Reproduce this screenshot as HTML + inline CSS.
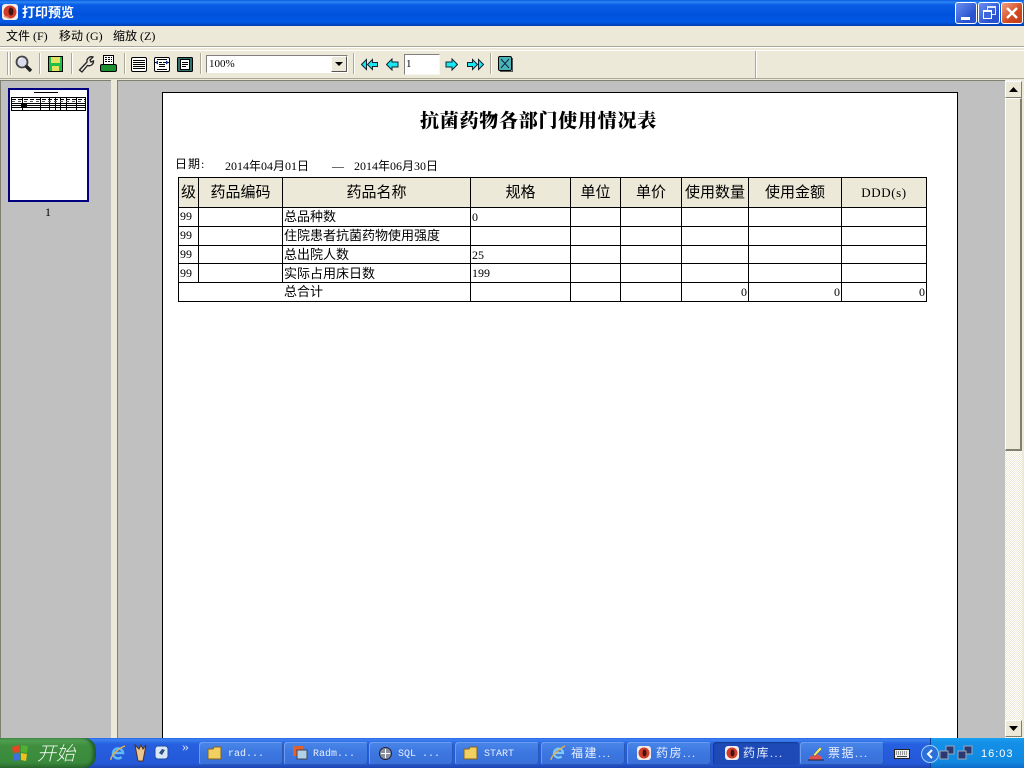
<!DOCTYPE html>
<html><head><meta charset="utf-8"><style>
html,body{margin:0;padding:0;width:1024px;height:768px;overflow:hidden;background:#ece9d8}
body{position:relative;font:12px/14px "Liberation Serif","WenQuanYi Zen Hei","Noto Sans CJK SC",sans-serif;color:#000}
div,svg{position:absolute}
.t{white-space:nowrap}
.h{position:absolute;background:#000;height:1px}
.v{position:absolute;background:#000;width:1px}
.th{font-size:15px;line-height:16px;text-align:center;white-space:nowrap}
.c{white-space:nowrap}
.l{font-size:13px}
.task{top:742px;height:23px;border-radius:3px;background:linear-gradient(#4a86e8,#3c76e0 50%,#3a70d8);color:#fff;box-shadow:inset 1px 1px 0 #6a9cf0,inset -1px -1px 0 #2a58b8}
.task span{position:absolute;left:29px;top:4px;white-space:nowrap;letter-spacing:1.500px;color:#e8f0ff}
.task span.m{font:10px/14px "Liberation Mono",monospace;letter-spacing:0;top:6px}
.sep{position:absolute;top:53px;width:1px;height:21px;background:#aca899;box-shadow:1px 0 0 #fff}
</style></head><body>

<!-- title bar -->
<div style="left:0;top:0;width:1024px;height:26px;background:linear-gradient(#0a5ae0 0,#2c86f4 8%,#0a5fe6 18%,#0052dc 55%,#0058e4 85%,#003cb0 100%)"></div>
<svg style="left:1px;top:3px" width="18" height="18" viewBox="0 0 18 18"><rect x="1" y="1" width="16" height="16" rx="3" fill="#f4ece8"/><circle cx="9" cy="9" r="6.500" fill="#d03c28"/><ellipse cx="10" cy="8.500" rx="2.500" ry="4" fill="#401410"/><path d="M3 13l5 2" stroke="#e88870" stroke-width="1.500"/></svg>
<div class="t" style="left:22px;top:5px;font-size:13px;line-height:15px;font-weight:bold;color:#fff">打印预览</div>
<div style="left:955px;top:2px;width:20px;height:20px;border:1px solid #fff;border-radius:3px;box-sizing:content-box;background:linear-gradient(135deg,#6a90f0,#2a52d0 70%)"><div style="left:5px;top:14px;width:9px;height:3px;background:#fff"></div></div>
<div style="left:978px;top:2px;width:20px;height:20px;border:1px solid #fff;border-radius:3px;background:linear-gradient(135deg,#6a90f0,#2a52d0 70%)"><div style="left:8px;top:3px;width:7px;height:6px;border:1px solid #dfe8ff;border-top-width:2px"></div><div style="left:4px;top:7px;width:7px;height:6px;border:1px solid #fff;border-top-width:2px;background:#3f68dc"></div></div>
<div style="left:1001px;top:2px;width:20px;height:20px;border:1px solid #fff;border-radius:3px;background:linear-gradient(135deg,#f0a080,#d04a20 60%,#c03c18)"><svg style="left:3px;top:3px" width="14" height="14"><path d="M2 2l10 10M12 2L2 12" stroke="#fff" stroke-width="2.400"/></svg></div>

<!-- menu -->
<div class="t" style="left:6px;top:29px">文件 (F)</div>
<div class="t" style="left:59px;top:29px">移动 (G)</div>
<div class="t" style="left:113px;top:29px">缩放 (Z)</div>

<!-- toolbar -->
<div style="left:0;top:46px;width:1024px;height:1px;background:#aca899"></div>
<div style="left:0;top:47px;width:1024px;height:1px;background:#fff"></div>
<div style="left:0;top:50px;width:755px;height:27px;border-top:1px solid #fff;border-bottom:1px solid #aca899;border-right:1px solid #aca899;box-shadow:1px 0 0 #fff"></div>
<div style="left:755px;top:50px;width:269px;height:27px;border-top:1px solid #fff;border-bottom:1px solid #aca899"></div>
<div style="left:0;top:78px;width:1024px;height:1px;background:#aca899"></div>
<div style="left:7px;top:52px;width:1px;height:23px;background:#aca899;box-shadow:1px 0 0 #fff,3px 0 0 #aca899,4px 0 0 #fff"></div>
<div class="sep" style="left:39px"></div><div class="sep" style="left:71px"></div><div class="sep" style="left:124px"></div><div class="sep" style="left:200px"></div><div class="sep" style="left:353px"></div><div class="sep" style="left:490px"></div>

<svg style="left:15px;top:55px" width="18" height="18"><circle cx="7" cy="7" r="5.500" fill="#d8dcec" stroke="#444" stroke-width="1.800"/><path d="M4 5a3 3 0 0 1 3-2" stroke="#fff" fill="none"/><path d="M11 11l5 5" stroke="#222" stroke-width="3.400"/></svg>
<svg style="left:48px;top:56px" width="15" height="16"><rect x=".5" y=".5" width="14" height="15" fill="#20c048" stroke="#000"/><rect x="3" y="1" width="9" height="6" fill="#e8e060"/><rect x="4" y="10" width="7" height="5" fill="#e8e060"/></svg>
<svg style="left:78px;top:55px" width="17" height="18"><path d="M1.500 15l7.500-8a4.500 4.500 0 0 1 6-5l-3 3 1 2 2.500-1a4.500 4.500 0 0 1-6 4.500L4 17z" fill="#ece8dc" stroke="#222" stroke-width="1.300"/></svg>
<svg style="left:100px;top:55px" width="17" height="18"><rect x="3.500" y=".5" width="10" height="9" fill="#fff" stroke="#000"/><path d="M5 2.500h7M5 4.500h7M5 6.500h7" stroke="#000" stroke-dasharray="2 1"/><rect x=".5" y="9.500" width="16" height="7" rx="1.500" fill="#1a9030" stroke="#000"/></svg>
<svg style="left:131px;top:57px" width="16" height="15"><rect x=".5" y=".5" width="15" height="14" rx="1.500" fill="#fff" stroke="#000"/><path d="M2 3.500h12M2 5.500h12M2 7.500h12M2 9.500h12M2 11.500h12" stroke="#000"/></svg>
<svg style="left:154px;top:57px" width="16" height="15"><rect x=".5" y=".5" width="15" height="14" rx="1.500" fill="#fff" stroke="#000"/><path d="M3 2.500h10M5 7.500h6M5 9.500h6M3 12.500h10" stroke="#000"/><path d="M1 5.500h14" stroke="#000" stroke-dasharray="3 1"/><path d="M1 5.500l3-2v4zM15 5.500l-3-2v4z" fill="#003090"/></svg>
<svg style="left:177px;top:57px" width="16" height="15"><rect x=".5" y=".5" width="15" height="14" rx="1" fill="#2f7070" stroke="#000"/><rect x="3.500" y="2.500" width="9" height="10" fill="#fff" stroke="#000"/><path d="M5 5.500h6M5 7.500h6M5 9.500h4" stroke="#000"/></svg>

<!-- combo -->
<div style="left:206px;top:55px;width:142px;height:18px;background:#fff;box-sizing:border-box;border:1px solid #808080;border-right-color:#fff;border-bottom-color:#fff"></div>
<div class="t" style="left:209px;top:57px;font-size:11px">100%</div>
<div style="left:331px;top:56px;width:16px;height:16px;background:#ece9d8;box-sizing:border-box;border:1px solid #fff;border-right-color:#555;border-bottom-color:#555"></div>
<svg style="left:335px;top:62px" width="8" height="4"><path d="M0 0h8L4 4z"/></svg>

<svg style="left:361px;top:58px" width="17" height="13"><path d="M5.500 1.500L.5 6.500l5 5zM11.500 1.500l-5 5 5 5v-3h5v-4h-5z" fill="#18e8f0" stroke="#123"/></svg>
<svg style="left:386px;top:58px" width="13" height="13"><path d="M.5 6.500l5.500-5.500v3h6v5H6v3z" fill="#18e8f0" stroke="#123"/></svg>
<div style="left:404px;top:54px;width:36px;height:21px;background:#fff;box-sizing:border-box;border:1px solid #808080;border-right-color:#f8f8f0;border-bottom-color:#f8f8f0"></div>
<div class="t" style="left:406px;top:57px;font-size:11px">1</div>
<svg style="left:445px;top:58px" width="13" height="13"><path d="M12.500 6.500L7 1v3H1v5h6v3z" fill="#18e8f0" stroke="#123"/></svg>
<svg style="left:467px;top:58px" width="17" height="13"><path d="M.5 4.500h5v-3l5 5-5 5v-3h-5zM11.500 1.500l5 5-5 5z" fill="#18e8f0" stroke="#123"/></svg>
<svg style="left:498px;top:56px" width="16" height="17"><rect x=".5" y=".5" width="13" height="14" rx="1.500" fill="#48b4b8" stroke="#000"/><path d="M3 3l8 9M11 3l-8 9" stroke="#124"/><path d="M14.500 2v13.500H2" stroke="#555" fill="none"/></svg>

<!-- main panes -->
<div style="left:0;top:80px;width:1024px;height:658px;background:#ece9d8"></div>
<div style="left:0;top:80px;width:111px;height:658px;background:#c0c0c0;border-top:1px solid #808070;border-left:1px solid #808070;box-sizing:border-box"></div>
<div style="left:117px;top:80px;width:888px;height:658px;background:#c0c0c0;border-top:1px solid #808070;border-left:1px solid #808070;box-sizing:border-box"></div>

<!-- thumbnail -->
<div style="left:8px;top:88px;width:81px;height:114px;background:#fff;box-sizing:border-box;border:2px solid #000080"></div>
<svg style="left:10px;top:90px" width="77" height="22"><path d="M24 2.500h24" stroke="#000"/><path d="M1 7.500h75M1 13.500h75M1 15.500h75M1 17.500h75M1 20.500h75M1.500 7v14M12.500 7v14M30.500 7v14M39.500 7v14M45.500 7v14M50.500 7v14M56.500 7v14M66.500 7v14M75.500 7v14" stroke="#000"/><path d="M2 9.500h73" stroke="#000" stroke-dasharray="4 2"/><path d="M2 11.500h73" stroke="#555" stroke-dasharray="3 3"/><rect x="11" y="13" width="6" height="4"/></svg>
<div class="t" style="left:45px;top:205px">1</div>

<!-- page -->
<div style="left:162px;top:92px;width:796px;height:646px;background:#fff;box-sizing:border-box;border:1px solid #000;border-bottom:0"></div>
<div class="t" style="left:420px;top:111px;font:bold 19px/21px 'Liberation Serif','Noto Serif CJK SC',serif;font-weight:900;letter-spacing:.75px">抗菌药物各部门使用情况表</div>
<div class="t" style="left:175px;top:157px;letter-spacing:1px">日期:</div>
<div class="t" style="left:225px;top:159px">2014年04月01日</div>
<div class="t" style="left:332px;top:159px">—</div>
<div class="t" style="left:354px;top:159px">2014年06月30日</div>

<!-- table -->
<div style="left:179px;top:178px;width:747px;height:29px;background:#ece9d8"></div>
<div class="h" style="left:178px;top:177px;width:749px"></div>
<div class="h" style="left:178px;top:207px;width:749px"></div>
<div class="h" style="left:178px;top:226px;width:749px"></div>
<div class="h" style="left:178px;top:245px;width:749px"></div>
<div class="h" style="left:178px;top:263px;width:749px"></div>
<div class="h" style="left:178px;top:282px;width:749px"></div>
<div class="h" style="left:178px;top:301px;width:749px"></div>
<div class="v" style="left:178px;top:177px;height:125px"></div>
<div class="v" style="left:198px;top:177px;height:105px"></div>
<div class="v" style="left:282px;top:177px;height:105px"></div>
<div class="v" style="left:470px;top:177px;height:125px"></div>
<div class="v" style="left:570px;top:177px;height:125px"></div>
<div class="v" style="left:620px;top:177px;height:125px"></div>
<div class="v" style="left:681px;top:177px;height:125px"></div>
<div class="v" style="left:748px;top:177px;height:125px"></div>
<div class="v" style="left:841px;top:177px;height:125px"></div>
<div class="v" style="left:926px;top:177px;height:125px"></div>

<div class="th" style="left:179px;top:185px;width:19px">级</div>
<div class="th" style="left:199px;top:185px;width:83px">药品编码</div>
<div class="th" style="left:283px;top:185px;width:187px">药品名称</div>
<div class="th" style="left:471px;top:185px;width:99px">规格</div>
<div class="th" style="left:571px;top:185px;width:49px">单位</div>
<div class="th" style="left:621px;top:185px;width:60px">单价</div>
<div class="th" style="left:682px;top:185px;width:66px">使用数量</div>
<div class="th" style="left:749px;top:185px;width:92px">使用金额</div>
<div class="th" style="left:842px;top:185px;width:84px;font-size:13px;letter-spacing:.6px">DDD(s)</div>

<div class="c" style="left:180px;top:209px">99</div><div class="c l" style="left:284px;top:210px">总品种数</div><div class="c" style="left:472px;top:210px">0</div>
<div class="c" style="left:180px;top:228px">99</div><div class="c l" style="left:284px;top:229px">住院患者抗菌药物使用强度</div>
<div class="c" style="left:180px;top:247px">99</div><div class="c l" style="left:284px;top:248px">总出院人数</div><div class="c" style="left:472px;top:248px">25</div>
<div class="c" style="left:180px;top:266px">99</div><div class="c l" style="left:284px;top:267px">实际占用床日数</div><div class="c" style="left:472px;top:266px">199</div>
<div class="c l" style="left:284px;top:285px">总合计</div>
<div class="c" style="left:741px;top:285px">0</div><div class="c" style="left:834px;top:285px">0</div><div class="c" style="left:919px;top:285px">0</div>

<!-- scrollbar -->
<div style="left:1005px;top:80px;width:17px;height:658px;background:repeating-conic-gradient(#fff 0 25%,#ece9d8 0 50%) 0 0/2px 2px"></div>
<div style="left:1005px;top:81px;width:17px;height:17px;background:#ece9d8;box-sizing:border-box;border:1px solid #fff;border-right-color:#808070;border-bottom-color:#808070"></div>
<svg style="left:1009px;top:87px" width="9" height="5"><path d="M0 5h9L4.500 0z"/></svg>
<div style="left:1005px;top:98px;width:17px;height:353px;background:#ece9d8;box-sizing:border-box;border:1px solid #fff;border-right:2px solid #808070;border-bottom:2px solid #808070"></div>
<div style="left:1005px;top:720px;width:17px;height:17px;background:#ece9d8;box-sizing:border-box;border:1px solid #fff;border-right-color:#808070;border-bottom-color:#808070"></div>
<svg style="left:1009px;top:726px" width="9" height="5"><path d="M0 0h9L4.500 5z"/></svg>
<div style="left:1022px;top:80px;width:2px;height:658px;background:#ece9d8"></div>

<!-- taskbar -->
<div style="left:0;top:738px;width:1024px;height:30px;background:linear-gradient(#2a6ae8 0,#3c80f0 6%,#2660e0 20%,#2458d8 85%,#1c44b0 100%)"></div>
<div style="left:0;top:738px;width:96px;height:30px;border-radius:0 12px 12px 0;background:linear-gradient(#5aa85a,#3f8f3f 25%,#3a8a3c 80%,#2c6e30);box-shadow:inset -3px 0 3px #1f5a2a"></div>
<svg style="left:11px;top:744px" width="19" height="18"><path d="M1 3l7-2 1 7-7 1z" fill="#e04a20"/><path d="M10 1l7 1-1 7-6-1z" fill="#50b030"/><path d="M2 10l7-1v7l-7 1z" fill="#4070e0"/><path d="M10 9l6 1-1 7-5-1z" fill="#f0c020"/></svg>
<div class="t" style="left:37px;top:741px;font:italic 300 19px/24px 'Noto Sans CJK SC',sans-serif;color:#f0f8f0">开始</div>

<svg style="left:109px;top:744px" width="18" height="18"><path d="M4 9h10a5 5 0 1 0-1.500 4" fill="none" stroke="#60b8f8" stroke-width="2.500"/><path d="M2 16C1 12 10 4 16 2" stroke="#e8b040" stroke-width="1.400" fill="none"/></svg>
<svg style="left:133px;top:744px" width="14" height="18"><path d="M2 1l3 16h5l3-16-3 4-2-4-2 4z" fill="#e8c890" stroke="#503020" stroke-width="1"/></svg>
<svg style="left:154px;top:744px" width="16" height="17"><rect x="1" y="2" width="13" height="13" rx="3" fill="#d8e8f8" stroke="#2050a0"/><path d="M5 9l3-4 3 1-3 5z" fill="#305080"/></svg>
<div class="t" style="left:182px;top:741px;color:#cfe0ff;font-size:14px">»</div>

<div class="task" style="left:199px;width:84px"><svg style="left:8px;top:4px" width="16" height="14"><path d="M1 3h5l1-2h7v12H1z" fill="#f0d060" stroke="#806020"/></svg><span class="m">rad...</span></div>
<div class="task" style="left:284px;width:84px"><svg style="left:8px;top:3px" width="16" height="16"><rect x="1" y="1" width="10" height="10" fill="#e06030"/><rect x="5" y="5" width="10" height="9" fill="#b0d0e8" stroke="#445"/></svg><span class="m">Radm...</span></div>
<div class="task" style="left:369px;width:84px"><svg style="left:9px;top:4px" width="15" height="15"><circle cx="7.500" cy="7.500" r="6" fill="#8890a0" stroke="#223"/><path d="M7.500 3v9M3 7.500h9" stroke="#fff"/></svg><span class="m">SQL ...</span></div>
<div class="task" style="left:455px;width:84px"><svg style="left:8px;top:4px" width="16" height="14"><path d="M1 3h5l1-2h7v12H1z" fill="#f0d060" stroke="#806020"/></svg><span class="m">START</span></div>
<div class="task" style="left:541px;width:84px"><svg style="left:9px;top:3px" width="16" height="16"><path d="M4 8h9a4.500 4.500 0 1 0-1.500 3.500" fill="none" stroke="#80c8f8" stroke-width="2.200"/><path d="M1 15C1 11 9 4 15 1" stroke="#e8b040" stroke-width="1.300" fill="none"/></svg><span style="left:30px">福建...</span></div>
<div class="task" style="left:627px;width:84px"><svg style="left:9px;top:3px" width="16" height="16"><rect x="1" y="1" width="14" height="14" rx="3" fill="#f4ece8"/><circle cx="8" cy="8" r="5.500" fill="#d03c28"/><ellipse cx="8.500" cy="8" rx="2" ry="3.500" fill="#401410"/></svg><span>药房...</span></div>
<div class="task" style="left:713px;width:86px;background:#1e4ab8;box-shadow:inset 1px 1px 1px #123a90"><svg style="left:11px;top:3px" width="16" height="16"><rect x="1" y="1" width="14" height="14" rx="3" fill="#f4ece8"/><circle cx="8" cy="8" r="5.500" fill="#d03c28"/><ellipse cx="8.500" cy="8" rx="2" ry="3.500" fill="#401410"/></svg><span style="left:30px">药库...</span></div>
<div class="task" style="left:800px;width:84px"><svg style="left:8px;top:4px" width="17" height="15"><path d="M1 11l8-3 5 3v3H1z" fill="#e05050"/><path d="M5 9l7-8 2 2-7 7z" fill="#f0f060" stroke="#555" stroke-width=".5"/><path d="M0 14h16" stroke="#223"/></svg><span style="left:28px">票据...</span></div>

<svg style="left:894px;top:749px" width="16" height="10"><rect x=".5" y=".5" width="15" height="9" fill="#eee" stroke="#222"/><path d="M2 3h12M2 5h12" stroke="#444" stroke-dasharray="1 1"/><path d="M3 7.500h10" stroke="#444"/></svg>

<div style="left:930px;top:738px;width:94px;height:30px;background:linear-gradient(#18a0f0,#1490e8 15%,#1088e0 80%,#0c6cc8);border-left:1px solid #104090"></div>
<div style="left:921px;top:745px;width:16px;height:16px;border-radius:50%;background:#2a70d8;border:1px solid #a0d0ff"><svg style="left:4px;top:3px" width="8" height="10"><path d="M6 1L2 5l4 4" stroke="#fff" stroke-width="2" fill="none"/></svg></div>
<svg style="left:939px;top:745px" width="16" height="16"><rect x="7" y="1" width="8" height="8" fill="#2c3870" stroke="#9ab"/><rect x="1" y="6" width="8" height="8" fill="#2c3870" stroke="#9ab"/></svg>
<svg style="left:957px;top:745px" width="16" height="16"><rect x="7" y="1" width="8" height="8" fill="#2c3870" stroke="#9ab"/><rect x="1" y="6" width="8" height="8" fill="#2c3870" stroke="#9ab"/></svg>
<div class="t" style="left:981px;top:747px;color:#fff;letter-spacing:1px;font-family:'Liberation Sans',sans-serif;font-size:11px">16:03</div>
</body></html>
